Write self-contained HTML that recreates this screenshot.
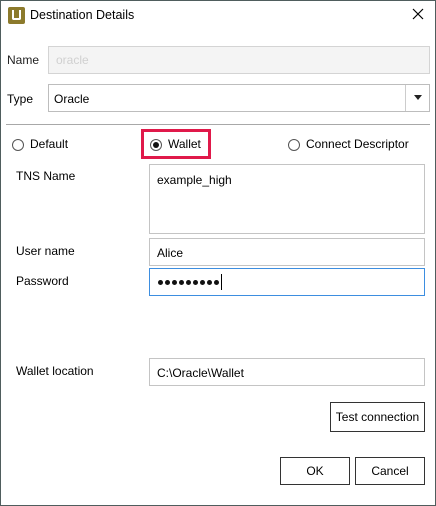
<!DOCTYPE html>
<html><head><style>
*{box-sizing:border-box;margin:0;padding:0}
body{width:436px;height:506px;background:#fff;font-family:"Liberation Sans",sans-serif;font-size:12px;color:#000;position:relative;overflow:hidden}
.frame{position:absolute;left:0;top:0;width:436px;height:506px;border:1px solid #4f5d5d}
.a{position:absolute;white-space:nowrap}
.box{position:absolute;border:1px solid #c4c4c4;background:#fff}
.btn{position:absolute;border:1px solid #333;background:#fff;text-align:center}
.rad{position:absolute;width:12px;height:12px;border:1px solid #555;border-radius:50%;background:#fff}
.dot{position:absolute;top:280px;width:5px;height:5px;border-radius:50%;background:#111}
</style></head><body>
<div class="frame"></div>
<div class="a" style="left:8px;top:7px;width:17px;height:17px;background:#8c7a2c;border-radius:2px"></div>
<div class="a" style="left:12px;top:10px;width:9px;height:10px;border:2.5px solid #fff;border-top:none;border-radius:0 0 2px 2px"></div>
<div class="a" style="left:30px;top:8px;font-size:12.5px">Destination Details</div>
<svg class="a" style="left:412px;top:8px" width="12" height="12"><path d="M1 1L11 11M11 1L1 11" stroke="#000" stroke-width="1.2"/></svg>

<div class="a" style="left:7px;top:53px;color:#222">Name</div>
<div class="box" style="left:48px;top:46px;width:382px;height:28px;background:#f4f4f4;border-color:#d4d4d4"></div>
<div class="a" style="left:56px;top:53px;color:#d0d0d0">oracle</div>

<div class="a" style="left:7px;top:92px">Type</div>
<div class="box" style="left:48px;top:84px;width:382px;height:28px;border-color:#bdbdbd"></div>
<div class="a" style="left:54px;top:92px">Oracle</div>
<div class="a" style="left:405px;top:85px;width:1px;height:26px;background:#ccc"></div>
<svg class="a" style="left:414px;top:95px" width="9" height="6"><path d="M0 0H8L4 5Z" fill="#222"/></svg>

<div class="a" style="left:6px;top:124px;width:424px;height:1px;background:#a8a8a8"></div>

<div class="rad" style="left:12px;top:139px"></div>
<div class="a" style="left:30px;top:137px">Default</div>
<div class="a" style="left:141px;top:129px;width:70px;height:30px;border:3px solid #e0194a"></div>
<div class="rad" style="left:150px;top:139px"></div>
<div class="a" style="left:153px;top:142px;width:6px;height:6px;border-radius:50%;background:#111"></div>
<div class="a" style="left:168px;top:137px">Wallet</div>
<div class="rad" style="left:288px;top:139px"></div>
<div class="a" style="left:306px;top:137px">Connect Descriptor</div>

<div class="a" style="left:16px;top:169px">TNS Name</div>
<div class="box" style="left:149px;top:164px;width:276px;height:70px"></div>
<div class="a" style="left:157px;top:173px">example_high</div>

<div class="a" style="left:16px;top:244px">User name</div>
<div class="box" style="left:149px;top:238px;width:276px;height:28px"></div>
<div class="a" style="left:157px;top:246px">Alice</div>

<div class="a" style="left:16px;top:274px">Password</div>
<div class="box" style="left:149px;top:268px;width:276px;height:28px;border-color:#3d8ee0"></div>
<div class="dot" style="left:158px"></div><div class="dot" style="left:165px"></div><div class="dot" style="left:172px"></div>
<div class="dot" style="left:179px"></div><div class="dot" style="left:186px"></div><div class="dot" style="left:193px"></div>
<div class="dot" style="left:200px"></div><div class="dot" style="left:207px"></div><div class="dot" style="left:214px"></div>
<div class="a" style="left:221px;top:274px;width:1px;height:16px;background:#000"></div>

<div class="a" style="left:16px;top:364px">Wallet location</div>
<div class="box" style="left:149px;top:358px;width:276px;height:28px"></div>
<div class="a" style="left:157px;top:366px">C:\Oracle\Wallet</div>

<div class="btn" style="left:330px;top:402px;width:95px;height:30px;line-height:28px">Test connection</div>
<div class="btn" style="left:280px;top:457px;width:70px;height:28px;line-height:26px">OK</div>
<div class="btn" style="left:355px;top:457px;width:70px;height:28px;line-height:26px">Cancel</div>
</body></html>
